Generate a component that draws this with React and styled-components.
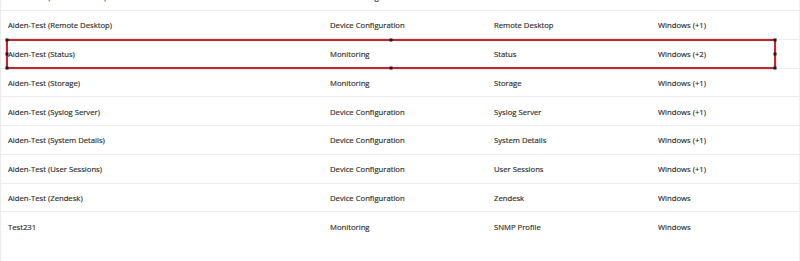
import React from 'react';
import styled, { createGlobalStyle } from 'styled-components';

const GlobalStyle = createGlobalStyle`
  html, body {
    margin: 0;
    padding: 0;
    background: #fff;
  }
  body {
    font-family: "Open Sans", "Liberation Sans", sans-serif;
  }
`;

const Root = styled.div`
  width: 800px;
  height: 261px;
  overflow: hidden;
  background: #fff;
  border-left: 1px solid #ececec;
  border-right: 1px solid #f0f0f0;
  box-sizing: border-box;
`;

const Rows = styled.div`
  margin-top: -17.75px;
  display: flex;
  flex-direction: column;
`;

const Row = styled.div`
  position: relative;
  display: grid;
  grid-template-columns: 322px 164px 164px 1fr;
  align-items: center;
  height: 28.75px;
  padding-left: 7px;
  padding-top: 1px;
  box-sizing: border-box;
  border-bottom: ${p => (p.$last ? 'none' : '1px solid #ececec')};
  font-size: 7.7px;
  color: #2a2a2a;
`;

const Cell = styled.div`
  white-space: nowrap;
  overflow: hidden;
  -webkit-text-stroke: 0.15px #2a2a2a;
`;

const Selection = styled.div`
  position: absolute;
  left: 5px;
  right: 23px;
  top: -1px;
  bottom: -1px;
  border: 2px solid #c0282f;
  box-shadow: 0 0 2px rgba(220, 80, 90, 0.45);
  pointer-events: none;
`;

const Handle = styled.span`
  position: absolute;
  width: 3px;
  height: 3px;
  background: #1a1a1a;
  left: ${p => p.$x};
  top: ${p => p.$y};
  transform: translate(-50%, -50%);
`;

const rows = [
  ['Aiden-Test (Remote Access)', 'Device Configuration', 'Remote Access', 'Windows'],
  ['Aiden-Test (Remote Desktop)', 'Device Configuration', 'Remote Desktop', 'Windows (+1)'],
  ['Aiden-Test (Status)', 'Monitoring', 'Status', 'Windows (+2)'],
  ['Aiden-Test (Storage)', 'Monitoring', 'Storage', 'Windows (+1)'],
  ['Aiden-Test (Syslog Server)', 'Device Configuration', 'Syslog Server', 'Windows (+1)'],
  ['Aiden-Test (System Details)', 'Device Configuration', 'System Details', 'Windows (+1)'],
  ['Aiden-Test (User Sessions)', 'Device Configuration', 'User Sessions', 'Windows (+1)'],
  ['Aiden-Test (Zendesk)', 'Device Configuration', 'Zendesk', 'Windows'],
  ['Test231', 'Monitoring', 'SNMP Profile', 'Windows'],
];

const handles = [
  ['-1px', '-1px'], ['-1px', '50%'], ['-1px', 'calc(100% + 1px)'],
  ['50%', '-1px'], ['50%', 'calc(100% + 1px)'],
  ['calc(100% + 1px)', '-1px'], ['calc(100% + 1px)', '50%'], ['calc(100% + 1px)', 'calc(100% + 1px)'],
];

export default function App() {
  return (
    <Root>
      <GlobalStyle />
      <Rows>
        {rows.map((r, i) => (
          <Row key={i} $last={i === rows.length - 1}>
            {r.map((c, j) => <Cell key={j}>{c}</Cell>)}
            {i === 2 && (
              <Selection>
                {handles.map(([x, y], k) => <Handle key={k} $x={x} $y={y} />)}
              </Selection>
            )}
          </Row>
        ))}
      </Rows>
    </Root>
  );
}
